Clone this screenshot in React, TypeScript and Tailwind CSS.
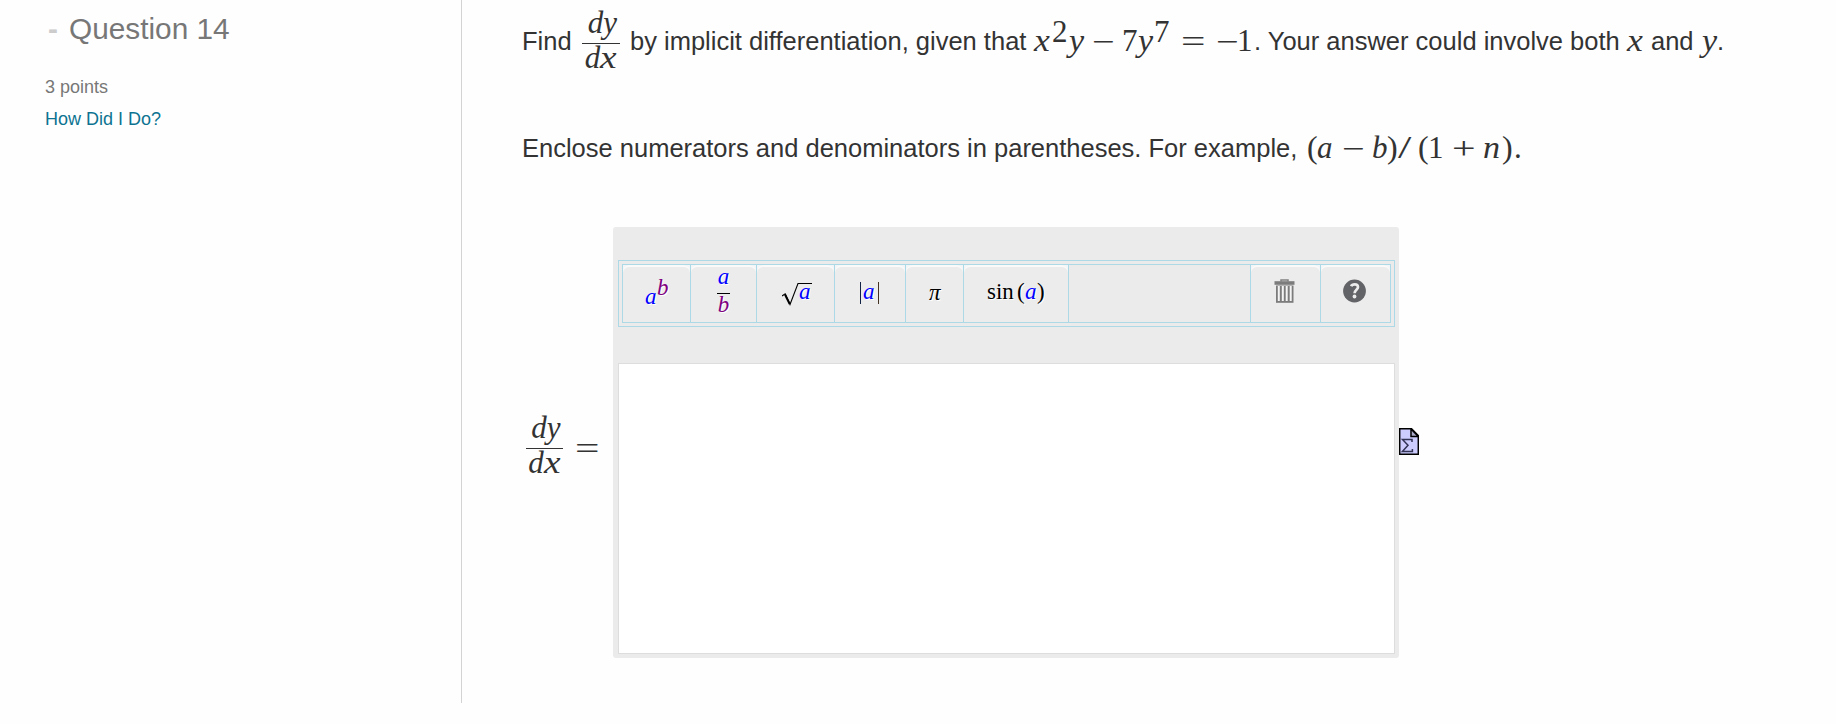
import type { ReactNode } from "react";
import clsx from "clsx";

type Props = { className?: string; children?: ReactNode };

// One symbol of a formula
function Sym({ className, children }: Props) {
  return (
    <span className={clsx("inline-block origin-left translate-y-px whitespace-nowrap font-['Liberation_Serif',serif] leading-none", className)}>
      {children}
    </span>
  );
}

function Derivative({ className }: { className?: string }) {
  return (
    <span className={clsx("inline-flex flex-col items-center font-['Liberation_Serif',serif] text-[31px] italic", className)}>
      <span className="h-[36px] pl-[3px] leading-[31px]">dy</span>
      <span className="h-px w-full bg-[#333]" />
      <span className="-ml-[3px] leading-[28px]">
        d<span className="inline-block origin-left scale-x-120">x</span>
      </span>
    </span>
  );
}

function ToolButton({ className, children }: Props) {
  return (
    <div className={clsx("border-l border-[#add8e6] bg-[#f3f6f8]", className)}>
      <button className="block h-[57px] w-full whitespace-nowrap rounded-t-md bg-[#ececec] text-left font-['Liberation_Serif',serif] text-[23px] leading-[51px] text-black shadow-[inset_0_2px_0_#fafafa] [text-shadow:1px_1px_0_white]">
        <span className="block h-[57px]">{children}</span>
      </button>
    </div>
  );
}

function TrashIcon() {
  return (
    <svg className="ml-[23px] h-[39px] w-[22px] pt-[14px]" viewBox="0 0 22 25" fill="none">
      <path d="M7 2.5V1h7v1.5" stroke="#808080" strokeWidth="1.5" />
      <path d="M.5 2.2h20v3.6H.5z" fill="#7c7c7c" />
      <path d="M2 6.5h17.5v17.3H2z" fill="#7c7c7c" />
      <path d="M4.8 7v15M8.8 7v15M12.7 7v15M16.7 7v15" stroke="#f4f4f4" strokeWidth="2" />
    </svg>
  );
}

function HelpIcon() {
  return (
    <svg className="ml-[22px] h-[38px] w-6 pt-[14px]" viewBox="0 0 24 24" fill="none">
      <circle cx="11.5" cy="12" r="11.4" fill="#626366" />
      <path d="M8.2 7.2C9 5 14.8 4.2 15 8c.1 2.6-3.4 2.8-3.4 6.2" stroke="#ececec" strokeWidth="2.7" />
      <circle cx="11.5" cy="17.5" r="1.9" fill="#ececec" />
    </svg>
  );
}

function SigmaIcon() {
  return (
    <svg className="h-[27px] w-5" viewBox="0 0 20 27" fill="none">
      <path d="M.7.7h11.8l6.8 6.8v18.8H.7z" fill="#ccccff" stroke="black" strokeWidth="1.5" />
      <path d="M12 1v7.5h7.3z" fill="#ababc9" stroke="black" strokeWidth="1.5" />
      <path d="M13 14v-2.6H3.5L9 17.2l-5.6 6.3h10V21" stroke="#333355" strokeWidth="1.5" />
    </svg>
  );
}

export default function App() {
  return (
    <div className="flex h-[724px] w-[1836px] overflow-hidden bg-[#fefefe] font-['Liberation_Sans',Arial,sans-serif]">
      {/* Question info */}
      <aside className="h-[703px] w-[462px] shrink-0 border-r border-[#d3d3d3] pl-[45px]">
        <h2 className="mt-3 flex h-[34px] items-center text-[29.8px] leading-[34px] text-[#777]">
          <span className="w-[24px] pl-[3px] font-bold text-[#ccc]">-</span>
          Question 14
        </h2>
        <p className="mt-[29px] text-[18px] leading-6 text-[#777]">3 points</p>
        <a href="#" className="mt-2 block text-[18px] leading-6 text-[#0d7391]">
          How Did I Do?
        </a>
      </aside>

      {/* Question body */}
      <main className="w-[1374px] pl-[60px] text-[25.5px] text-[#333]">
        <p className="h-[82px] whitespace-nowrap leading-[82px]">
          <span className="inline-block w-[60px]">Find</span>
          <Derivative className="mr-[10px] w-[38px] align-[17px]" />
          <span className="inline-block w-[404px]">by implicit differentiation, given that</span>
          <Sym className="w-[18px] scale-x-115 text-[31px] italic">x</Sym>
          <Sym className="w-[17px] align-[9px] text-[31px]">2</Sym>
          <Sym className="w-[23px] scale-x-110 text-[31px] italic">y</Sym>
          <Sym className="w-[30px] scale-x-130 align-[-1px] text-[31px]">−</Sym>
          <Sym className="w-[16px] text-[31px]">7</Sym>
          <Sym className="w-[16px] scale-x-110 text-[31px] italic">y</Sym>
          <Sym className="w-[27px] align-[9px] text-[31px]">7</Sym>
          <Sym className="w-[35px] scale-x-140 align-[-1px] text-[31px]">=</Sym>
          <Sym className="w-[21px] scale-x-130 align-[-1px] text-[31px]">−</Sym>
          <Sym className="w-[17px] text-[31px]">1</Sym>
          <span className="inline-block w-[373px]">. Your answer could involve both</span>
          <Sym className="w-[24px] scale-x-115 text-[31px] italic">x</Sym>
          <span className="inline-block w-[51px]">and</span>
          <Sym className="w-[15px] scale-x-110 text-[31px] italic">y</Sym>.
        </p>

        <p className="mt-[48px] h-8 whitespace-nowrap leading-8">
          <span className="inline-block w-[785px]">Enclose numerators and denominators in parentheses. For example,</span>
          <Sym className="w-[10px] text-[32px]">(</Sym>
          <Sym className="w-[25px] text-[31px] italic">a</Sym>
          <Sym className="w-[30px] scale-x-130 align-[-1px] text-[31px]">−</Sym>
          <Sym className="w-[15px] text-[31px] italic">b</Sym>
          <Sym className="w-[11px] text-[32px]">)</Sym>
          <Sym className="w-[20px] scale-x-150 text-[32px]">/</Sym>
          <Sym className="w-[10px] text-[32px]">(</Sym>
          <Sym className="w-[24px] text-[31px]">1</Sym>
          <Sym className="w-[31px] scale-x-135 align-[-1px] text-[31px]">+</Sym>
          <Sym className="w-[19px] scale-x-110 text-[31px] italic">n</Sym>
          <Sym className="w-[12px] text-[32px]">)</Sym>
          <Sym className="text-[31px]">.</Sym>
        </p>

        <div className="mt-[65px] flex">
          <div className="w-[91px] whitespace-nowrap pt-[185px] pl-1 font-['Liberation_Serif',serif] text-[31px] leading-[64px]">
            <Derivative className="mr-[12px] w-[37px] align-[20px]" />
            <Sym className="scale-x-140">=</Sym>
          </div>

          {/* Equation editor */}
          <div className="h-[431px] w-[786px] rounded-[3px] bg-[#ebebeb] px-[5px] pt-[33px] pr-1">
            <div className="h-[67px] border border-[#add8e6] p-[3px]">
              <div className="flex h-[59px] border-y border-r border-[#add8e6]">
                <ToolButton className="w-[68px]">
                  <Sym className="ml-[22px] w-[12px] align-[-5px] italic text-[blue]">a</Sym>
                  <Sym className="align-[4px] italic text-[purple]">b</Sym>
                </ToolButton>
                <ToolButton className="w-[66px]">
                  <span className="ml-[26px] inline-flex w-[13px] flex-col items-center align-[14px] italic">
                    <span className="h-[26px] leading-[20px] text-[blue]">a</span>
                    <span className="h-px w-full bg-black" />
                    <span className="leading-[22px] text-[purple]">b</span>
                  </span>
                </ToolButton>
                <ToolButton className="w-[78px]">
                  <span className="ml-[25px] inline-flex items-baseline">
                    <svg className="-mr-[15px] h-6 w-8 translate-y-[8px]" viewBox="0 0 32 24" fill="none">
                      <path d="M0 14l3.2-2.2L8 22.5 16 1.5h14" stroke="black" strokeWidth="1.1" />
                      <path d="M3 12.5l4.7 9.5" stroke="black" strokeWidth="2" />
                    </svg>
                    <Sym className="italic text-[blue]">a</Sym>
                  </span>
                </ToolButton>
                <ToolButton className="w-[71px]">
                  <span className="ml-[25px] inline-block h-[22px] w-px bg-[#124] align-[-6px]" />
                  <Sym className="mx-[2px] w-[13px] italic text-[blue]">a</Sym>
                  <span className="inline-block h-[22px] w-px bg-[#432] align-[-6px]" />
                </ToolButton>
                <ToolButton className="w-[58px]">
                  <Sym className="ml-[23px] align-[-1px] italic">π</Sym>
                </ToolButton>
                <ToolButton className="w-[105px]">
                  <Sym className="ml-[23px] w-[30px]">sin</Sym>
                  <Sym className="w-[8px]">(</Sym>
                  <Sym className="w-[12px] italic text-[blue]">a</Sym>
                  <Sym>)</Sym>
                </ToolButton>
                <div className="w-[182px] border-l border-[#add8e6]" />
                <ToolButton className="w-[70px]">
                  <TrashIcon />
                </ToolButton>
                <ToolButton className="w-[70px]">
                  <HelpIcon />
                </ToolButton>
              </div>
            </div>
            <div className="mt-9 h-[291px] border border-[#ddd] bg-white" />
          </div>

          <div className="pt-[201px]">
            <SigmaIcon />
          </div>
        </div>
      </main>
    </div>
  );
}
